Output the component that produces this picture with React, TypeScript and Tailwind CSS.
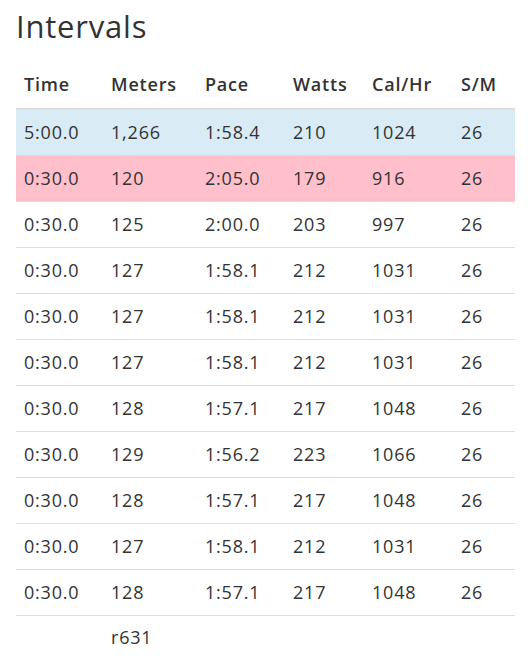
const rows = [
  ["5:00.0", "1,266", "1:58.4", "210", "1024", "26"],
  ["0:30.0", "120", "2:05.0", "179", "916", "26"],
  ["0:30.0", "125", "2:00.0", "203", "997", "26"],
  ["0:30.0", "127", "1:58.1", "212", "1031", "26"],
  ["0:30.0", "127", "1:58.1", "212", "1031", "26"],
  ["0:30.0", "127", "1:58.1", "212", "1031", "26"],
  ["0:30.0", "128", "1:57.1", "217", "1048", "26"],
  ["0:30.0", "129", "1:56.2", "223", "1066", "26"],
  ["0:30.0", "128", "1:57.1", "217", "1048", "26"],
  ["0:30.0", "127", "1:58.1", "212", "1031", "26"],
  ["0:30.0", "128", "1:57.1", "217", "1048", "26"],
];

const headers = ["Time", "Meters", "Pace", "Watts", "Cal/Hr", "S/M"];
const widths = ["w-[87px]", "w-[94px]", "w-[88px]", "w-[79px]", "w-[89px]", "w-[62px]"];

function rowBg(i: number) {
  if (i === 0) return "bg-[#d9ebf5]";
  if (i === 1) return "bg-[#ffbfcb]";
  return "bg-white";
}

export default function App() {
  return (
    <div className="bg-white min-h-[661px] px-4 text-[#333] tracking-[0.8px] font-['Open_Sans',sans-serif]">
      <h1 className="text-[31px] leading-[36px] pt-[8px] pb-[17px]">Intervals</h1>
      <table className="w-[499px] border-collapse table-fixed">
        <thead>
          <tr className="h-[48px] border-b-2 border-[#ddd]">
            {headers.map((h, i) => (
              <th key={h} className={`${widths[i]} px-2 text-left font-semibold text-[18px]`}>
                {h}
              </th>
            ))}
          </tr>
        </thead>
        <tbody>
          {rows.map((r, i) => (
            <tr key={i} className={`h-[46px] border-t border-[#ddd] ${rowBg(i)}`}>
              {r.map((c, j) => (
                <td key={j} className="px-2 text-[18px]">
                  {c}
                </td>
              ))}
            </tr>
          ))}
          <tr className="h-[44px] border-t border-[#ddd]">
            <td className="px-2" />
            <td className="px-2 text-[18px]">r631</td>
            <td colSpan={4} />
          </tr>
        </tbody>
      </table>
    </div>
  );
}
